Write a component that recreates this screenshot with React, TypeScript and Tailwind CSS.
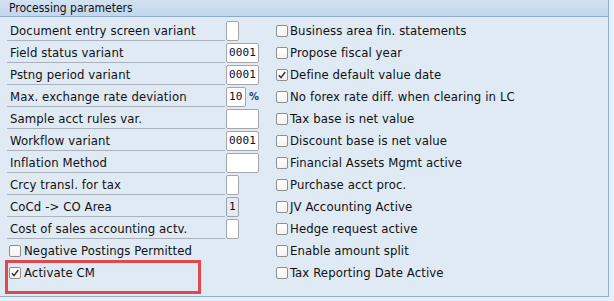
type Field = { label: string; value?: string; size: 1 | 2 | 4; disabled?: boolean; unit?: string }

const fields: Field[] = [
  { label: 'Document entry screen variant', size: 1 },
  { label: 'Field status variant', value: '0001', size: 4 },
  { label: 'Pstng period variant', value: '0001', size: 4 },
  { label: 'Max. exchange rate deviation', value: '10', size: 2, unit: '%' },
  { label: 'Sample acct rules var.', size: 4 },
  { label: 'Workflow variant', value: '0001', size: 4 },
  { label: 'Inflation Method', size: 4 },
  { label: 'Crcy transl. for tax', size: 1 },
  { label: 'CoCd -> CO Area', value: '1', size: 1, disabled: true },
  { label: 'Cost of sales accounting actv.', size: 1 },
]

const rightChecks: [string, boolean][] = [
  ['Business area fin. statements', false],
  ['Propose fiscal year', false],
  ['Define default value date', true],
  ['No forex rate diff. when clearing in LC', false],
  ['Tax base is net value', false],
  ['Discount base is net value', false],
  ['Financial Assets Mgmt active', false],
  ['Purchase acct proc.', false],
  ['JV Accounting Active', false],
  ['Hedge request active', false],
  ['Enable amount split', false],
  ['Tax Reporting Date Active', false],
]

function Check({ checked }: { checked?: boolean }) {
  return (
    <div className="w-[12px] h-[12px] shrink-0 rounded-[2px] border border-[#8e8f8f] bg-gradient-to-b from-white to-[#f3f3f3] flex items-center justify-center">
      {checked && (
        <svg width="10" height="10" viewBox="0 0 10 10">
          <path d="M1.8 5.2 L4 7.6 L8.2 2" fill="none" stroke="#333" strokeWidth="1.5" />
        </svg>
      )}
    </div>
  )
}

function Input({ f }: { f: Field }) {
  const w = f.size === 1 ? 'w-[13px]' : f.size === 2 ? 'w-[20px]' : 'w-[33px]'
  return (
    <div className="flex items-center">
      <div
        className={`${w} h-[20px] rounded-[2px] border ${
          f.disabled ? 'border-[#9ba3ab] bg-[#e6ebf0]' : 'border-[#a6a6a6] bg-white'
        } pl-[2px] flex items-center font-['DejaVu_Sans_Mono',monospace] text-[11px] text-[#0a0a2a]`}
      >
        {f.value}
      </div>
      {f.unit && <span className="ml-[3px] text-[11px] text-[#1b3d7a] font-bold">{f.unit}</span>}
    </div>
  )
}

export default function App() {
  return (
    <div className="w-[614px] h-[301px] bg-[#e9f0f8] font-['DejaVu_Sans_Condensed','DejaVu_Sans',sans-serif] text-[13px] tracking-[0.1px] text-[#111] relative overflow-hidden">
      <div className="w-[609px] h-[297px] bg-[#dfeaf5] border-r border-b border-[#8db0d7] relative">
        <div className="h-[17px] bg-gradient-to-b from-[#d3e2f2] to-[#c3d6ec] border-b border-[#8eaacd] pl-[9px] leading-[16px] text-[12px] tracking-normal">
          Processing parameters
        </div>
        <div className="grid grid-cols-[276px_1fr] pt-[3px]">
          <div className="flex flex-col">
            {fields.map((f) => (
              <div key={f.label} className="h-[22px] flex items-center pl-[7px]">
                <div className="w-[218px] h-[21px] self-start border-b border-[#a9b1b9] pl-[3px] pt-[1px] flex items-center">
                  {f.label}
                </div>
                <div className="ml-[1px]">
                  <Input f={f} />
                </div>
              </div>
            ))}
            <div className="h-[22px] flex items-center pl-[9px] gap-[3px]">
              <Check />
              <span>Negative Postings Permitted</span>
            </div>
            <div className="h-[22px] flex items-center pl-[9px] gap-[3px]">
              <Check checked />
              <span>Activate CM</span>
            </div>
          </div>
          <div className="flex flex-col">
            {rightChecks.map(([label, c]) => (
              <div key={label} className="h-[22px] flex items-center gap-[2px]">
                <Check checked={c} />
                <span>{label}</span>
              </div>
            ))}
          </div>
        </div>
        <div className="absolute left-[5px] top-[260px] w-[196px] h-[34px] border-[3px] border-[#e0484b]" />
      </div>
    </div>
  )
}
